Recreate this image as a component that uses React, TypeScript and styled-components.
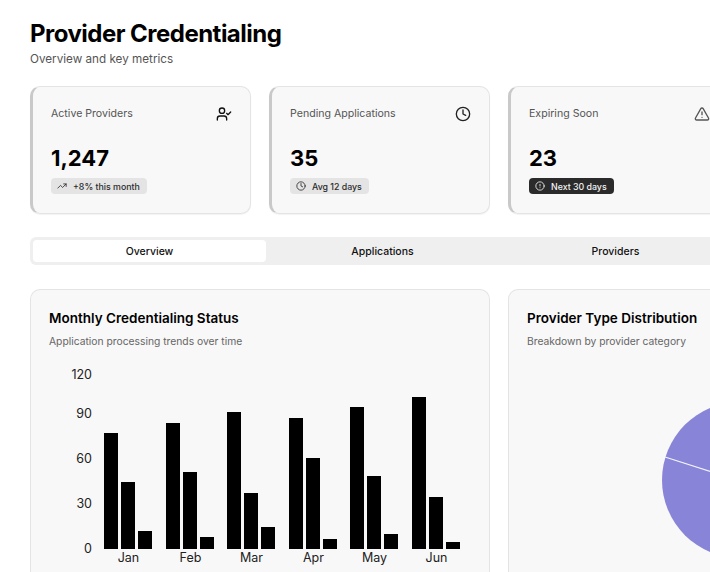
import styled, { createGlobalStyle } from "styled-components";
import { CircleAlert, Clock, TrendingUp, TriangleAlert, UserCheck } from "lucide-react";

const GlobalStyle = createGlobalStyle`
  html, body {
    margin: 0;
    height: 572px;
    overflow: hidden;
    background: #fff;
    font-family: Inter, "Liberation Sans", sans-serif;
    color: #000;
  }
`;

const Page = styled.main`
  width: 705px;
  padding: 19px 0 0 30px;
`;

const Title = styled.h1`
  margin: 0;
  font-size: 24px;
  line-height: 29px;
  font-weight: 700;
  letter-spacing: -0.52px;
`;

const Subtitle = styled.p`
  margin: 3px 0 0;
  font-size: 11.7px;
  line-height: 16px;
  color: #555;
`;

const StatGrid = styled.section`
  display: grid;
  grid-template-columns: repeat(3, 221px);
  gap: 18px;
  margin-top: 19px;
`;

const StatCard = styled.div`
  box-sizing: border-box;
  height: 128px;
  padding: 18px 18px 0 18px;
  background: #f8f8f8;
  border: 1px solid #e4e4e4;
  border-left: 3px solid #c9c9c9;
  border-radius: 10px;
  box-shadow: 0 1px 1px rgba(0, 0, 0, 0.05);
`;

const StatHead = styled.div`
  display: flex;
  justify-content: space-between;
  align-items: center;
  height: 17px;
`;

const StatLabel = styled.span`
  font-size: 10.6px;
  color: #555;
`;

const StatValue = styled.div`
  margin-top: 22px;
  font-size: 22px;
  line-height: 28px;
  font-weight: 700;
`;

const Badge = styled.span<{ $dark?: boolean }>`
  display: inline-flex;
  align-items: center;
  gap: 6px;
  height: 16px;
  margin-top: 6px;
  padding: 0 7px 0 6px;
  border-radius: 4px;
  font-size: 8.8px;
  font-weight: 500;
  background: ${({ $dark }) => ($dark ? "#2b2b2b" : "#e4e4e4")};
  color: ${({ $dark }) => ($dark ? "#f5f5f5" : "#2b2b2b")};
`;

const TabBar = styled.nav`
  display: grid;
  grid-template-columns: repeat(3, 233px);
  box-sizing: border-box;
  width: 705px;
  height: 28px;
  margin-top: 23px;
  padding: 3px;
  background: #efefef;
  border-radius: 6px;
`;

const Tab = styled.button<{ $active?: boolean }>`
  padding: 0;
  border: none;
  border-radius: 4px;
  font-family: inherit;
  font-size: 10.5px;
  font-weight: 500;
  color: #111;
  background: ${({ $active }) => ($active ? "#fff" : "transparent")};
`;

const PanelGrid = styled.section`
  display: grid;
  grid-template-columns: 460px 221px;
  gap: 18px;
  margin-top: 24px;
`;

const Panel = styled.div`
  box-sizing: border-box;
  height: 283px;
  padding: 20px 18px;
  background: #f8f8f8;
  border: 1px solid #e4e4e4;
  border-bottom: none;
  border-radius: 10px 10px 0 0;
`;

const PanelTitle = styled.h2`
  margin: 0;
  font-size: 13.5px;
  line-height: 17px;
  font-weight: 600;
  white-space: nowrap;
`;

const PanelSub = styled.p`
  margin: 7px 0 0;
  font-size: 10.3px;
  line-height: 14px;
  color: #666;
  white-space: nowrap;
`;

const ChartSvg = styled.svg`
  display: block;
  margin: 4px 0 0 -49px;
  overflow: visible;

  text {
    font-family: Inter, "Liberation Sans", sans-serif;
    font-size: 12.5px;
    fill: #222;
  }
`;

const PieSvg = styled.svg`
  display: block;
  margin: 4px 0 0 -19px;
  overflow: visible;
`;

// tops of each bar, read off the chart (px from page top)
const months = [
  { name: "Jan", x: 104, tops: [433, 482, 531] },
  { name: "Feb", x: 166, tops: [423, 472, 537] },
  { name: "Mar", x: 227, tops: [412, 493, 527] },
  { name: "Apr", x: 289, tops: [418, 458, 539] },
  { name: "May", x: 350, tops: [407, 476, 534] },
  { name: "Jun", x: 412, tops: [397, 497, 542] },
];

const yLabels = [
  { text: "120", y: 379 },
  { text: "90", y: 418 },
  { text: "60", y: 463 },
  { text: "30", y: 508 },
  { text: "0", y: 553 },
];

const BAR_W = 14;
const BASE = 549;
// svg top sits at page y 352
const OFFSET = 352;

const BarChart = () => (
  <ChartSvg width="490" height="220" viewBox={`0 ${OFFSET} 490 220`}>
    {yLabels.map((l) => (
      <text key={l.text} x="92" y={l.y} textAnchor="end">
        {l.text}
      </text>
    ))}
    {months.map((m) => (
      <g key={m.name}>
        {m.tops.map((top, i) => (
          <rect key={i} x={m.x + i * 17} y={top} width={BAR_W} height={BASE - top} fill="#000" />
        ))}
        <text x={m.x + 24.5} y="562" textAnchor="middle">
          {m.name}
        </text>
      </g>
    ))}
  </ChartSvg>
);

// x positions here are measured on the page, the svg starts at the panel edge
const PieChart = () => (
  <PieSvg width="221" height="220" viewBox={`508 ${OFFSET} 221 220`}>
    <circle cx="740" cy="480" r="78" fill="#8884d8" />
    <line x1="740" y1="481" x2="665" y2="457" stroke="#f4f4f8" strokeWidth="1.2" />
  </PieSvg>
);

export default function App() {
  return (
    <Page>
      <GlobalStyle />
      <Title>Provider Credentialing</Title>
      <Subtitle>Overview and key metrics</Subtitle>

      <StatGrid>
        <StatCard>
          <StatHead>
            <StatLabel>Active Providers</StatLabel>
            <UserCheck size={16} color="#111" />
          </StatHead>
          <StatValue>1,247</StatValue>
          <Badge>
            <TrendingUp size={10} />
            +8% this month
          </Badge>
        </StatCard>
        <StatCard>
          <StatHead>
            <StatLabel>Pending Applications</StatLabel>
            <Clock size={16} color="#222" />
          </StatHead>
          <StatValue>35</StatValue>
          <Badge>
            <Clock size={10} />
            Avg 12 days
          </Badge>
        </StatCard>
        <StatCard>
          <StatHead>
            <StatLabel>Expiring Soon</StatLabel>
            <TriangleAlert size={16} color="#555" />
          </StatHead>
          <StatValue>23</StatValue>
          <Badge $dark>
            <CircleAlert size={10} />
            Next 30 days
          </Badge>
        </StatCard>
      </StatGrid>

      <TabBar>
        <Tab $active>Overview</Tab>
        <Tab>Applications</Tab>
        <Tab>Providers</Tab>
      </TabBar>

      <PanelGrid>
        <Panel>
          <PanelTitle>Monthly Credentialing Status</PanelTitle>
          <PanelSub>Application processing trends over time</PanelSub>
          <BarChart />
        </Panel>
        <Panel>
          <PanelTitle>Provider Type Distribution</PanelTitle>
          <PanelSub>Breakdown by provider category</PanelSub>
          <PieChart />
        </Panel>
      </PanelGrid>
    </Page>
  );
}
